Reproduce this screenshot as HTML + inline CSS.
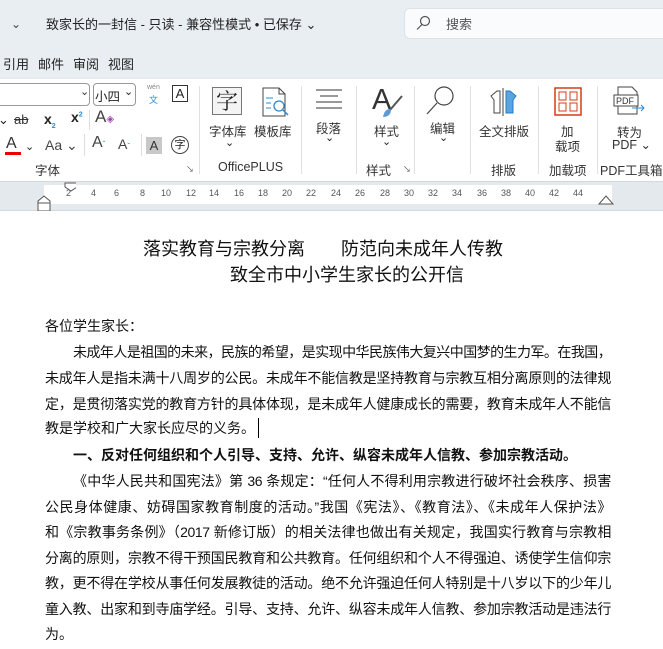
<!DOCTYPE html>
<html><head><meta charset="utf-8"><style>
*{margin:0;padding:0;box-sizing:border-box}
body{width:663px;height:649px;overflow:hidden;background:#fff;font-family:"Liberation Sans","Noto Sans CJK SC",sans-serif;color:#222;position:relative}
.a{position:absolute;white-space:nowrap}
.top{position:absolute;left:0;top:0;width:663px;height:211px;background:#e9eef2}
.rib{position:absolute;left:-10px;top:79px;width:690px;height:102px;background:#fff;border-radius:6px;box-shadow:0 1px 2px #c8ccd0}
.sep{position:absolute;top:86px;width:1px;height:88px;background:#e0e0e0}
.lbl{font-size:12.5px;color:#333}
.ruler{position:absolute;left:0;top:182px;width:663px;height:29px;background:#e4e9ed;border-bottom:1px solid #d6d9dc}
.rw{position:absolute;left:44px;top:3px;width:568px;height:19px;background:#fff}
.num{position:absolute;top:6px;font-size:9px;color:#555}
.ln{position:absolute;left:45px;width:566px;font-size:14px;line-height:20px;height:20px;white-space:nowrap;color:#111}
.j{text-align:justify;text-align-last:justify;letter-spacing:-0.4px}
.b{font-weight:bold}
</style></head><body>
<div class="top"></div>
<div class="a" style="left:11px;top:17px;font-size:12px;color:#444">⌄</div>
<div class="a" style="left:46px;top:14px;font-size:13px;color:#222">致家长的一封信 - 只读 - 兼容性模式 • 已保存 ⌄</div>
<div class="a" style="left:404px;top:8px;width:270px;height:31px;background:#fafbfc;border-radius:6px;border:1px solid #dde2e6"></div>
<svg class="a" style="left:415px;top:15px" width="16" height="16"><circle cx="10" cy="6" r="4.5" fill="none" stroke="#555" stroke-width="1.2"/><line x1="7" y1="9.5" x2="2" y2="14.5" stroke="#555" stroke-width="1.2"/></svg>
<div class="a" style="left:446px;top:14px;font-size:13px;color:#555">搜索</div>
<div class="a" style="left:3px;top:54px;font-size:13px;color:#222">引用</div>
<div class="a" style="left:38px;top:54px;font-size:13px;color:#222">邮件</div>
<div class="a" style="left:73px;top:54px;font-size:13px;color:#222">审阅</div>
<div class="a" style="left:108px;top:54px;font-size:13px;color:#222">视图</div>
<div class="rib"></div>
<div class="a" style="left:-6px;top:83px;width:96px;height:23px;border:1px solid #999;border-radius:4px"></div>
<div class="a" style="left:80px;top:85px;font-size:11px;color:#333">⌄</div>
<div class="a" style="left:93px;top:83px;width:43px;height:23px;border:1px solid #999;border-radius:4px"></div>
<div class="a" style="left:95px;top:86px;font-size:12.5px">小四</div>
<div class="a" style="left:124px;top:85px;font-size:11px">⌄</div>
<div class="a" style="left:147px;top:84px;font-size:7px;color:#888">wén</div>
<div class="a" style="left:149px;top:93px;font-size:9px;color:#2a8ad4">文</div>
<div class="a" style="left:172px;top:85px;width:16px;height:17px;border:1px solid #333;font-size:13px;text-align:center;line-height:15px">A</div>
<div class="a" style="left:-2px;top:112px;font-size:13px">⌄</div>
<div class="a" style="left:14px;top:112px;font-size:13px;text-decoration:line-through;color:#333">ab</div>
<div class="a" style="left:44px;top:111px;font-size:14px;font-weight:bold">x<sub style="font-size:7px;color:#2a8ad4">2</sub></div>
<div class="a" style="left:71px;top:109px;font-size:14px;font-weight:bold">x<sup style="font-size:7px;color:#2a8ad4">2</sup></div>
<div class="a" style="left:89px;top:110px;width:1px;height:20px;background:#ddd"></div>
<div class="a" style="left:95px;top:107px;font-size:17px;color:#444">A<span style="font-size:10px;color:#a040b0">◈</span></div>
<div class="a" style="left:6px;top:135px;font-size:16px;color:#333">A</div>
<div class="a" style="left:5px;top:152px;width:16px;height:3px;background:#e00"></div>
<div class="a" style="left:25px;top:140px;font-size:11px">⌄</div>
<div class="a" style="left:45px;top:137px;font-size:14px;color:#444">Aa ⌄</div>
<div class="a" style="left:84px;top:134px;width:1px;height:22px;background:#ddd"></div>
<div class="a" style="left:92px;top:134px;font-size:16px;color:#444">A<span style="font-size:8px;color:#2a8ad4">ˆ</span></div>
<div class="a" style="left:118px;top:136px;font-size:14px;color:#444">A<span style="font-size:8px;color:#2a8ad4">ˇ</span></div>
<div class="a" style="left:141px;top:134px;width:1px;height:22px;background:#ddd"></div>
<div class="a" style="left:146px;top:137px;width:16px;height:17px;background:#c8c8c8;font-size:13px;text-align:center;line-height:17px;color:#333">A</div>
<div class="a" style="left:171px;top:136px;width:18px;height:18px;border:1.3px solid #444;border-radius:50%;font-size:11px;text-align:center;line-height:16px">字</div>
<div class="a lbl" style="left:35px;top:160px">字体</div>
<div class="a" style="left:186px;top:164px;font-size:8px;color:#555">↘</div>
<div class="sep" style="left:199px"></div>
<div class="a" style="left:212px;top:87px;width:30px;height:28px;border:1px solid #777;background:#f4f4f4;font-size:22px;text-align:center;line-height:26px;font-family:'Noto Serif CJK SC',serif">字</div>
<svg class="a" style="left:259px;top:86px" width="32" height="34"><path d="M4 2h16l6 6v22H4z" fill="#fff" stroke="#444"/><path d="M20 2v6h6" fill="none" stroke="#444"/><line x1="7" y1="12" x2="14" y2="12" stroke="#2a8ad4"/><line x1="7" y1="17" x2="12" y2="17" stroke="#2a8ad4"/><line x1="7" y1="22" x2="12" y2="22" stroke="#2a8ad4"/><circle cx="20" cy="20" r="5" fill="#fff" stroke="#2a8ad4" stroke-width="1.3"/><line x1="24" y1="24" x2="29" y2="29" stroke="#2a8ad4" stroke-width="1.5"/></svg>
<div class="a lbl" style="left:209px;top:121px">字体库</div>
<div class="a lbl" style="left:254px;top:121px">模板库</div>
<div class="a" style="left:225px;top:136px;font-size:11px">⌄</div>
<div class="a lbl" style="left:218px;top:160px">OfficePLUS</div>
<div class="sep" style="left:301px"></div>
<svg class="a" style="left:314px;top:88px" width="30" height="22"><g stroke="#333" stroke-width="1.1"><line x1="2" y1="2" x2="28" y2="2"/><line x1="6" y1="8" x2="24" y2="8"/><line x1="2" y1="14" x2="28" y2="14"/><line x1="2" y1="20" x2="28" y2="20"/></g></svg>
<div class="a lbl" style="left:316px;top:118px">段落</div>
<div class="a" style="left:325px;top:131px;font-size:11px">⌄</div>
<div class="sep" style="left:356px"></div>
<div class="a" style="left:372px;top:84px;font-size:29px;color:#333">A</div>
<svg class="a" style="left:378px;top:94px" width="28" height="26"><path d="M24 2L12 16" stroke="#555" stroke-width="2"/><path d="M12 15c-4 0-6 3-7 8 4 0 8-2 8-7z" fill="#5b9bd5"/></svg>
<div class="a lbl" style="left:374px;top:121px">样式</div>
<div class="a" style="left:382px;top:135px;font-size:11px">⌄</div>
<div class="a lbl" style="left:366px;top:160px">样式</div>
<div class="a" style="left:403px;top:164px;font-size:8px;color:#555">↘</div>
<div class="sep" style="left:414px"></div>
<svg class="a" style="left:424px;top:84px" width="34" height="32"><circle cx="20" cy="12" r="9" fill="none" stroke="#444" stroke-width="1.2"/><line x1="13" y1="19" x2="3" y2="30" stroke="#444" stroke-width="1.2"/></svg>
<div class="a lbl" style="left:430px;top:118px">编辑</div>
<div class="a" style="left:439px;top:131px;font-size:11px">⌄</div>
<div class="sep" style="left:470px"></div>
<svg class="a" style="left:487px;top:88px" width="34" height="28"><path d="M4 8l6-5h3v22h-6V12z" fill="#fff" stroke="#444"/><path d="M19 3h4l6 5-3 4v13h-7z" fill="#5aa4e0" stroke="#2a78c0"/><line x1="16" y1="0" x2="16" y2="28" stroke="#444"/></svg>
<div class="a lbl" style="left:479px;top:121px">全文排版</div>
<div class="a lbl" style="left:491px;top:160px">排版</div>
<div class="sep" style="left:538px"></div>
<svg class="a" style="left:554px;top:87px" width="28" height="29"><rect x="1" y="1" width="26" height="27" fill="none" stroke="#d04010" stroke-width="1.5"/><g fill="none" stroke="#d04010"><rect x="5" y="5" width="7" height="8"/><rect x="16" y="5" width="7" height="8"/><rect x="5" y="16" width="7" height="8"/><rect x="16" y="16" width="7" height="8"/></g></svg>
<div class="a lbl" style="left:561px;top:121px">加</div>
<div class="a lbl" style="left:555px;top:136px">载项</div>
<div class="a lbl" style="left:549px;top:160px">加载项</div>
<div class="sep" style="left:597px"></div>
<svg class="a" style="left:612px;top:86px" width="36" height="30"><path d="M6 1h14l5 5v22H6z" fill="#fff" stroke="#444"/><rect x="2" y="9" width="24" height="11" fill="#fff" stroke="#444"/><text x="4" y="18" font-size="9" font-family="Liberation Sans" fill="#333">PDF</text><path d="M20 22h12m-3-3l3 3-3 3" fill="none" stroke="#2a8ad4"/></svg>
<div class="a lbl" style="left:617px;top:122px">转为</div>
<div class="a lbl" style="left:612px;top:137px">PDF ⌄</div>
<div class="a lbl" style="left:600px;top:160px">PDF工具箱</div>
<div class="ruler"><div class="rw"></div>
<div class="num" style="left:66px">2</div><div class="num" style="left:91px">4</div><div class="num" style="left:114px">6</div><div class="num" style="left:140px">8</div><div class="num" style="left:161px">10</div><div class="num" style="left:186px">12</div><div class="num" style="left:209px">14</div><div class="num" style="left:234px">16</div><div class="num" style="left:258px">18</div><div class="num" style="left:282px">20</div><div class="num" style="left:306px">22</div><div class="num" style="left:331px">24</div><div class="num" style="left:355px">26</div><div class="num" style="left:380px">28</div><div class="num" style="left:404px">30</div><div class="num" style="left:428px">32</div><div class="num" style="left:452px">34</div><div class="num" style="left:477px">36</div><div class="num" style="left:501px">38</div><div class="num" style="left:525px">40</div><div class="num" style="left:549px">42</div><div class="num" style="left:573px">44</div>
<svg class="a" style="left:36px;top:0" width="40" height="29"><path d="M29 1h12v4l-6 4-6-4z" fill="#fff" stroke="#555"/><path d="M2 19l6-5 6 5v10H2z" fill="#fff" stroke="#555"/><line x1="2" y1="21" x2="14" y2="21" stroke="#555"/></svg>
<svg class="a" style="left:598px;top:12px" width="16" height="12"><path d="M1 10l7-8 7 8z" fill="#fff" stroke="#555"/></svg>
</div>
<div class="a" style="left:143px;top:235px;font-size:18px;color:#111">落实教育与宗教分离　　防范向未成年人传教</div>
<div class="a" style="left:230px;top:261px;font-size:18px;color:#111">致全市中小学生家长的公开信</div>
<div class="ln" style="top:316px">各位学生家长：</div>
<div class="ln j" style="top:342px;padding-left:28px;letter-spacing:-0.75px">未成年人是祖国的未来，民族的希望，是实现中华民族伟大复兴中国梦的生力军。在我国，</div>
<div class="ln j" style="top:368px">未成年人是指未满十八周岁的公民。未成年不能信教是坚持教育与宗教互相分离原则的法律规</div>
<div class="ln j" style="top:394px">定，是贯彻落实党的教育方针的具体体现，是未成年人健康成长的需要，教育未成年人不能信</div>
<div class="ln" style="top:418px">教是学校和广大家长应尽的义务。<span style="display:inline-block;width:1px;height:20px;background:#000;vertical-align:top;margin-left:3px"></span></div>
<div class="ln b" style="top:445px;padding-left:28px">一、反对任何组织和个人引导、支持、允许、纵容未成年人信教、参加宗教活动。</div>
<div class="ln j" style="top:471px;padding-left:28px">《中华人民共和国宪法》第 36 条规定：“任何人不得利用宗教进行破坏社会秩序、损害</div>
<div class="ln j" style="top:497px">公民身体健康、妨碍国家教育制度的活动。”我国《宪法》、《教育法》、《未成年人保护法》</div>
<div class="ln j" style="top:522px">和《宗教事务条例》（2017 新修订版）的相关法律也做出有关规定，我国实行教育与宗教相</div>
<div class="ln j" style="top:548px">分离的原则，宗教不得干预国民教育和公共教育。任何组织和个人不得强迫、诱使学生信仰宗</div>
<div class="ln j" style="top:573px">教，更不得在学校从事任何发展教徒的活动。绝不允许强迫任何人特别是十八岁以下的少年儿</div>
<div class="ln j" style="top:599px">童入教、出家和到寺庙学经。引导、支持、允许、纵容未成年人信教、参加宗教活动是违法行</div>
<div class="ln" style="top:624px">为。</div>
</body></html>
